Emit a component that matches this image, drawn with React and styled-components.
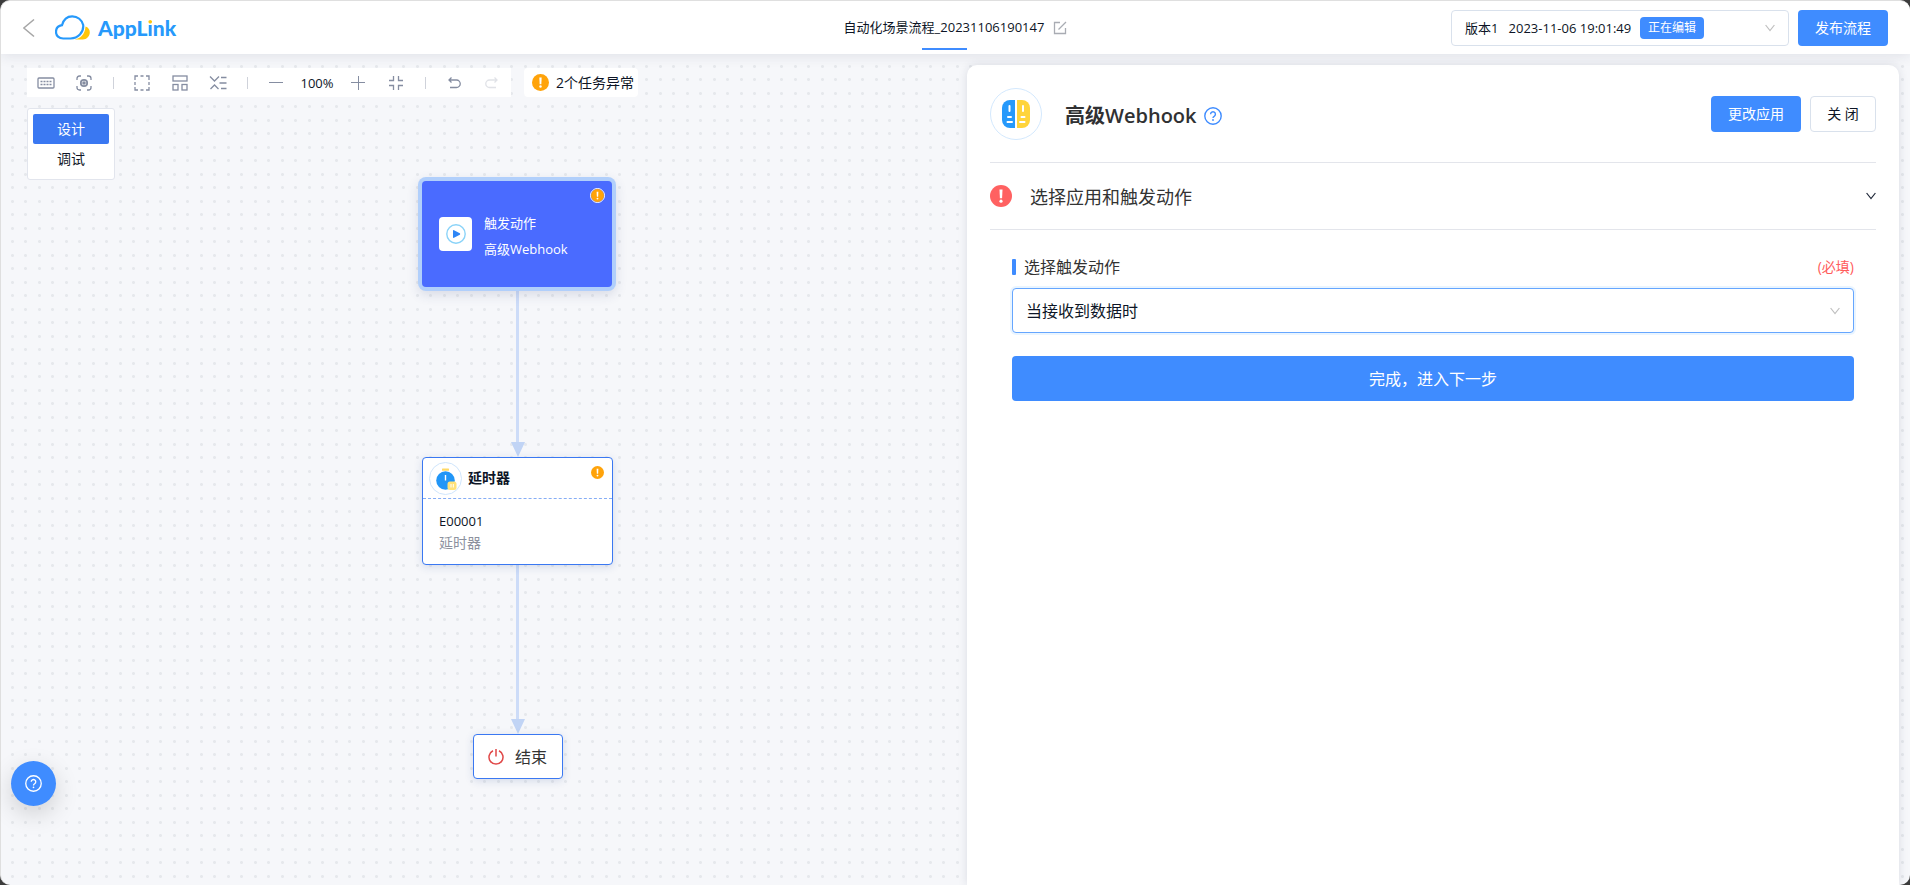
import React from "react";
import styled, { createGlobalStyle } from "styled-components";

const BLUE = "#3f8cff";

const GlobalStyle = createGlobalStyle`
  *, *::before, *::after { box-sizing: border-box; }
  body {
    margin: 0;
    background: #3c3c3c;
    color: #0d1526;
    font: 13px/20px "Open Sans", "Noto Sans CJK SC", sans-serif;
  }
  button, select, input { font: inherit; color: inherit; }
  button { border: 0; padding: 0; background: none; cursor: pointer; }
  h1, h2, p { margin: 0; font-size: inherit; font-weight: inherit; }
  svg { display: block; flex: none; }
`;

const Window = styled.div`
  min-height: 100vh;
  display: flex;
  flex-direction: column;
  overflow: hidden;
  border: solid #dfdfdf;
  border-width: 1px 0 0 1px;
  border-radius: 10px;
  background: #f6f7fa;
`;

/* ---------- header ---------- */

const Header = styled.header`
  position: relative;
  z-index: 2;
  display: grid;
  grid-template-columns: 1fr auto 1fr;
  align-items: center;
  height: 53px;
  padding: 0 22px;
  background: #fff;
  box-shadow: 0 2px 12px rgba(30, 40, 70, 0.1);
`;

const Brand = styled.div`
  display: flex;
  align-items: center;
  gap: 20px;
`;

const Logo = styled.a`
  display: flex;
  align-items: center;
  gap: 7px;
  color: #2699fb;
  font: 900 21px/28px Lato, sans-serif;
  text-decoration: none;
`;

const LogoDot = styled.span`
  color: transparent;
  background: linear-gradient(#ffc60a 0 9px, #2699fb 9px);
  background-clip: text;
`;

const TitleBar = styled.div`
  display: flex;
  align-items: center;
  gap: 9px;
  height: 53px;
`;

const Title = styled.h1`
  position: relative;
  height: 53px;
  line-height: 53px;

  &::after {
    content: "";
    position: absolute;
    left: calc(50% - 22px);
    bottom: 4px;
    width: 45px;
    height: 2px;
    background: ${BLUE};
  }
`;

const HeaderActions = styled.div`
  display: flex;
  justify-content: flex-end;
  gap: 9px;
`;

const Picker = styled.label`
  display: flex;
  align-items: center;
  gap: 8px;
  width: ${(p) => (p.$wide ? "100%" : "338px")};
  height: ${(p) => (p.$wide ? 45 : 36)}px;
  padding: 0 13px;
  border: 1px solid ${(p) => (p.$active ? "#66a6ff" : "#d9e1ec")};
  border-radius: 4px;
  background: #fff;
  box-shadow: ${(p) => (p.$active ? "0 0 0 2px #eaf5ff" : "none")};
  font-size: ${(p) => (p.$wide ? 16 : 13)}px;

  select {
    flex: ${(p) => (p.$wide ? 1 : "none")};
    height: 100%;
    padding: 0;
    border: 0;
    outline: 0;
    background: none;
    appearance: none;
  }
  svg { margin-left: auto; }
`;

const Tag = styled.span`
  padding: 0 8px;
  border-radius: 4px;
  background: ${BLUE};
  color: #fff;
  font-size: 12px;
  line-height: 22px;
`;

const Button = styled.button`
  width: ${(p) => p.$width || "90px"};
  height: ${(p) => (p.$large ? 45 : 36)}px;
  border: ${(p) => (p.$plain ? "1px solid #d9e1ec" : "0")};
  border-radius: 4px;
  background: ${(p) => (p.$plain ? "#fff" : BLUE)};
  color: ${(p) => (p.$plain ? "#0d1526" : "#fff")};
  font-size: ${(p) => (p.$large ? 16 : 14)}px;
`;

/* ---------- canvas ---------- */

const dot = "radial-gradient(circle, #e6e8ec 1px, transparent 2px)";

const Workspace = styled.main`
  position: relative;
  flex: 1;
  display: grid;
  grid-template-columns: 509fr 491fr;
  padding-right: 11px;
  background-image: ${dot}, ${dot}, ${dot}, ${dot};
  background-size: 27px 27px;
  background-position: -2px -1px, 11px -1px, -2px 12px, 11px 12px;
`;

const Canvas = styled.section`
  position: relative;
  display: flex;
  flex-direction: column;
  align-items: flex-start;
  gap: 11px;
  min-height: 760px;
  padding: 14px 26px;
`;

const TopTools = styled.div`
  display: flex;
  gap: 13px;
`;

const Toolbar = styled.div`
  display: flex;
  align-items: center;
  height: 29px;
  background: #fff;
`;

const Tool = styled.button`
  display: grid;
  place-items: center;
  width: 38px;
  height: 29px;
  color: #858da1;
  opacity: ${(p) => (p.disabled ? 0.25 : 1)};
`;

const Separator = styled.span`
  width: 1px;
  height: 12px;
  margin: 0 9px 0 10px;
  background: #cfd2da;
`;

const ZoomLevel = styled.output`
  width: 44px;
  text-align: center;
`;

const Alert = styled.button`
  display: flex;
  align-items: center;
  gap: 7px;
  height: 29px;
  padding: 0 4px 0 8px;
  border-radius: 4px;
  background: #fff;
  font-size: 14px;
`;

const Modes = styled.div`
  display: flex;
  flex-direction: column;
  width: 88px;
  padding: 5px;
  border: 1px solid #e2e5ed;
  border-radius: 3px;
  background: #fff;
`;

const Mode = styled.button`
  height: 30px;
  border-radius: 2px;
  background: ${(p) => (p.$active ? "#3a78f2" : "transparent")};
  color: ${(p) => (p.$active ? "#fff" : "#0d1526")};
  font-size: 14px;
`;

const Flow = styled.div`
  position: absolute;
  left: 421px;
  top: 127px;
  display: flex;
  flex-direction: column;
  align-items: center;
  width: 191px;
`;

const TriggerNode = styled.article`
  position: relative;
  align-self: flex-start;
  display: flex;
  align-items: center;
  gap: 12px;
  width: 190px;
  height: 106px;
  padding: 0 17px;
  border-radius: 4px;
  background: #4a6bff;
  box-shadow: 0 0 0 4px #b1cffb, 0 4px 12px 4px rgba(40, 60, 110, 0.14);
  color: #fff;
  line-height: 26px;
`;

const TriggerText = styled.div`
  padding-top: 3px;
`;

const PlayTile = styled.span`
  display: grid;
  place-items: center;
  width: 33px;
  height: 34px;
  border-radius: 4px;
  background: #fff;
`;

const NodeBadge = styled.span`
  position: absolute;
  top: ${(p) => (p.$ringed ? 7 : 8)}px;
  right: ${(p) => (p.$ringed ? 7 : 8)}px;
  border: ${(p) => (p.$ringed ? "1px solid #fff" : "0")};
  border-radius: 50%;
`;

const Connector = styled.div`
  display: flex;
  flex-direction: column;
  align-items: center;
  height: ${(p) => p.$length}px;

  &::before {
    content: "";
    flex: 1;
    width: 3px;
    background: #cddcf8;
  }
  &::after {
    content: "";
    border: solid transparent;
    border-width: 15px 7px 0;
    border-top-color: #c1d4f5;
  }
`;

const StepNode = styled.article`
  position: relative;
  width: 191px;
  border: 1px solid #3a78f2;
  border-radius: 4px;
  background: #fff;
  box-shadow: 0 2px 8px rgba(40, 70, 140, 0.16);
`;

const StepHead = styled.h2`
  display: flex;
  align-items: center;
  gap: 6px;
  height: 41px;
  padding-left: 6px;
  border-bottom: 1px dashed #86adf5;
  font-size: 14px;
  font-weight: 700;
`;

const StepBody = styled.div`
  padding: 11px 16px 10px;
  line-height: 22px;
`;

const Muted = styled.p`
  color: #8c919e;
  font-size: 14px;
`;

const EndNode = styled.article`
  display: flex;
  align-items: center;
  justify-content: center;
  gap: 11px;
  width: 90px;
  height: 45px;
  border: 1px solid #3a78f2;
  border-radius: 4px;
  background: #fff;
  box-shadow: 0 2px 8px rgba(40, 70, 140, 0.16);
  color: #333;
  font-size: 16px;
`;

const HelpFab = styled.button`
  position: fixed;
  left: 11px;
  bottom: 79px;
  display: grid;
  place-items: center;
  width: 45px;
  height: 45px;
  border-radius: 50%;
  background: ${BLUE};
  box-shadow: 0 8px 24px rgba(0, 0, 0, 0.16);
  color: #fff;
`;

/* ---------- settings panel ---------- */

const Panel = styled.aside`
  margin-top: 11px;
  padding: 0 23px;
  border-radius: 10px 10px 0 0;
  background: #fff;
  box-shadow: 0 0 10px rgba(30, 40, 70, 0.13);
`;

const PanelHead = styled.div`
  display: flex;
  align-items: center;
  gap: 23px;
  height: 98px;
  border-bottom: 1px solid #e3e5eb;
`;

const AppIcon = styled.span`
  display: grid;
  place-items: center;
  width: 52px;
  height: 52px;
  border: 1px solid #d3e8fd;
  border-radius: 50%;
`;

const PanelName = styled.div`
  display: flex;
  align-items: center;
  gap: 7px;
  padding-top: 4px;
`;

const PanelTitle = styled.h2`
  color: #303133;
  font-size: 20px;
  font-weight: 600;
  line-height: 28px;
`;

const PanelActions = styled.div`
  display: flex;
  gap: 9px;
  margin-left: auto;
`;

const SectionToggle = styled.button`
  display: flex;
  align-items: center;
  gap: 18px;
  width: 100%;
  height: 67px;
  border-bottom: 1px solid #e3e5eb;
  color: #333;
  font-size: 18px;

  svg:last-child { margin-left: auto; }
`;

const SectionName = styled.span`
  padding-top: 2px;
`;

const Form = styled.form`
  display: flex;
  flex-direction: column;
  padding: 25px 22px;
`;

const FieldHead = styled.div`
  display: flex;
  align-items: center;
  justify-content: space-between;
  height: 24px;
  margin-bottom: 9px;
`;

const FieldLabel = styled.label`
  display: flex;
  align-items: center;
  gap: 8px;
  color: #333;
  font-size: 16px;

  &::before {
    content: "";
    width: 4px;
    height: 16px;
    border-radius: 1px;
    background: ${BLUE};
  }
`;

const Required = styled.span`
  color: #ff5c5c;
  font-size: 14px;
`;

const FormActions = styled.div`
  display: flex;
  margin-top: 23px;
`;

/* ---------- icons ---------- */

const Icon = ({ w = 18, h = 18, sw = 1.3, children, ...rest }) => (
  <svg
    width={w}
    height={h}
    viewBox={`0 0 ${w} ${h}`}
    fill="none"
    stroke="currentColor"
    strokeWidth={sw}
    aria-hidden="true"
    {...rest}
  >
    {children}
  </svg>
);

const Exclaim = ({ size, color }) => (
  <svg width={size} height={size} viewBox="0 0 22 22" aria-hidden="true">
    <circle cx="11" cy="11" r="11" fill={color} />
    <path d="M9.500 4.500h3l-.4 8.800h-2.200z" fill="#fff" />
    <circle cx="11" cy="16.200" r="1.600" fill="#fff" />
  </svg>
);

const Question = ({ size }) => (
  <svg
    width={size}
    height={size}
    viewBox="0 0 18 18"
    fill="none"
    stroke="currentColor"
    strokeWidth="1.4"
    aria-hidden="true"
  >
    <circle cx="9" cy="9" r="8.2" />
    <path d="M6.6 7.2a2.4 2.4 0 1 1 3.6 2.1c-.8.5-1.2.8-1.2 1.7" />
    <circle cx="9" cy="13" r=".9" fill="currentColor" stroke="none" />
  </svg>
);

const Chevron = ({ color }) => (
  <Icon w={10} h={8} sw={1.2} style={{ color }}>
    <path d="M.6 1 5 6.600 9.400 1" />
  </Icon>
);

const CloudLogo = () => (
  <svg width="36" height="26" viewBox="0 0 36 26" aria-hidden="true">
    <path d="M30.500 11.500c2.700.8 4.300 3 4.300 5.800 0 4-3 7.200-7 7.200h-8.300c5.500-.6 10.600-5 11-13z" fill="#ffc60a" />
    <path
      d="M8.200 23.500c-4.200 0-7.200-2.800-7.200-6.600 0-3.700 2.600-6.200 6-6.700C8.500 4.500 12.300 1.300 17.200 1.300c5.400 0 9.800 3.600 11 8.700.7 7.500-5.200 13.500-12.700 13.500z"
      fill="#fff"
      stroke="#2699fb"
      strokeWidth="2.200"
    />
  </svg>
);

const WebhookIcon = () => (
  <svg width="30" height="30" viewBox="0 0 30 30" aria-hidden="true">
    <path d="M9 1h5v28H9a8 8 0 0 1-8-8V9a8 8 0 0 1 8-8z" fill="#2699fb" />
    <path d="M16 1h5a8 8 0 0 1 8 8v12a8 8 0 0 1-8 8h-5z" fill="#ffd43b" />
    <path
      d="M8.500 7v5M22 7v5M7 18h3M20.500 18h3M6.500 23h4.500M19 23h4.500"
      stroke="#fff"
      strokeWidth="2"
      strokeLinecap="round"
    />
  </svg>
);

const TimerIcon = () => (
  <svg width="33" height="33" viewBox="0 0 33 33" aria-hidden="true">
    <circle cx="16.500" cy="16.500" r="16" fill="#fff" stroke="#cfe5fc" />
    <rect x="13" y="6.500" width="7" height="2.200" rx=".5" fill="#ffd966" />
    <circle cx="16.500" cy="18.500" r="9.300" fill="#2196f7" />
    <path d="M16.500 13v5.500" stroke="#fff" strokeWidth="1.400" />
    <rect x="18.500" y="19.500" width="9" height="8.500" rx="2.500" fill="#ffe27a" />
    <path d="M22 22v3.500M24.300 22v3.500" stroke="#fff" />
  </svg>
);

/* ---------- page ---------- */

function EditorHeader() {
  return (
    <Header>
      <Brand>
        <button aria-label="返回">
          <Icon w={12} h={20} sw={1.6} style={{ color: "#a6a6a6" }}>
            <path d="M11 1.500.8 10 11 18.500" />
          </Icon>
        </button>
        <Logo href="#home">
          <CloudLogo />
          <span>
            AppL<LogoDot>i</LogoDot>nk
          </span>
        </Logo>
      </Brand>
      <TitleBar>
        <Title>自动化场景流程_20231106190147</Title>
        <button aria-label="重命名">
          <Icon w={14} h={14} style={{ color: "#a9acb3" }}>
            <path d="M7 1.500H1.500v11h11V7M5.500 8.500l7.500-7.500" />
          </Icon>
        </button>
      </TitleBar>
      <HeaderActions>
        <Picker>
          <select aria-label="版本">
            <option>{"版本1\u00a0\u00a0\u00a02023-11-06 19:01:49"}</option>
          </select>
          <Tag>正在编辑</Tag>
          <Chevron color="#bfbfbf" />
        </Picker>
        <Button>发布流程</Button>
      </HeaderActions>
    </Header>
  );
}

function CanvasToolbar() {
  return (
    <TopTools>
      <Toolbar role="toolbar">
        <Tool aria-label="快捷键">
          <Icon>
            <rect x="1" y="4" width="16" height="10" rx="1" />
            <path d="M3.500 7.500h11M3.500 10.500h11" strokeDasharray="2 1" />
          </Icon>
        </Tool>
        <Tool aria-label="定位">
          <Icon>
            <path d="M2 6V4.500Q2 2 4.500 2H6M12 2h1.500Q16 2 16 4.500V6M16 12v1.500q0 2.500-2.500 2.500H12M6 16H4.500Q2 16 2 13.500V12" />
            <circle cx="9" cy="9" r="3.200" strokeWidth="1.800" />
            <circle cx="9" cy="9" r="1.800" fill="currentColor" stroke="none" />
          </Icon>
        </Tool>
        <Separator />
        <Tool aria-label="框选">
          <Icon>
            <path d="M2 6V2h3M7.500 2h3M13 2h3v4M16 8v3M16 13v3h-3M10.500 16h-3M5 16H2v-3M2 11V8" />
          </Icon>
        </Tool>
        <Tool aria-label="布局">
          <Icon>
            <rect x="2" y="2" width="14" height="5" />
            <rect x="2" y="10.500" width="5" height="5.500" />
            <rect x="11" y="10.500" width="5" height="5.500" />
          </Icon>
        </Tool>
        <Tool aria-label="折叠">
          <Icon>
            <path d="m1 2.500 4.500 4.500L10 2.500M1.500 15l4-4 4 4M12 3.500h5.500M10.500 9h7M12 14.500h5.500" />
          </Icon>
        </Tool>
        <Separator />
        <Tool aria-label="缩小">
          <Icon sw={1}>
            <path d="M2 8.500h14" />
          </Icon>
        </Tool>
        <ZoomLevel>100%</ZoomLevel>
        <Tool aria-label="放大">
          <Icon sw={1}>
            <path d="M2 8.500h14M9.500 2v14" />
          </Icon>
        </Tool>
        <Tool aria-label="适应画布">
          <Icon>
            <path d="M6.500 2v4.500H2M11.500 2v4.500H16M6.500 16v-4.500H2M11.500 16v-4.500H16" />
          </Icon>
        </Tool>
        <Separator />
        <Tool aria-label="撤销">
          <Icon>
            <path d="M6.500 3.500 4 6l2.500 2.500M4 6h7.500a3.500 3.500 0 0 1 0 7.500H5" />
          </Icon>
        </Tool>
        <Tool aria-label="重做" disabled>
          <Icon>
            <path d="M11.500 3.500 14 6l-2.500 2.500M14 6H6.500a3.500 3.500 0 0 0 0 7.500H13" />
          </Icon>
        </Tool>
      </Toolbar>
      <Alert>
        <Exclaim size={17} color="#ffa30a" />
        2个任务异常
      </Alert>
    </TopTools>
  );
}

function FlowChart() {
  return (
    <Flow>
      <TriggerNode>
        <PlayTile>
          <svg width="20" height="20" viewBox="0 0 20 20" aria-hidden="true">
            <circle cx="10" cy="10" r="9.200" fill="#fff" stroke="#8ad3f8" strokeWidth="1.400" />
            <path d="M7 6.800q0-1 1-.6l5.800 3q.9.800 0 1.600l-5.800 3q-1 .4-1-.6z" fill="#2f86f6" />
          </svg>
        </PlayTile>
        <TriggerText>
          <p>触发动作</p>
          <p>高级Webhook</p>
        </TriggerText>
        <NodeBadge $ringed>
          <Exclaim size={13} color="#ffa30a" />
        </NodeBadge>
      </TriggerNode>
      <Connector $length={170} />
      <StepNode>
        <StepHead>
          <TimerIcon />
          延时器
        </StepHead>
        <StepBody>
          <p>E00001</p>
          <Muted>延时器</Muted>
        </StepBody>
        <NodeBadge>
          <Exclaim size={13} color="#ffa30a" />
        </NodeBadge>
      </StepNode>
      <Connector $length={169} />
      <EndNode>
        <Icon w={16} h={16} sw={1.5} style={{ color: "#e04848" }}>
          <path d="M5 1.800a7 7 0 1 0 6 0M8 0v7.500" />
        </Icon>
        结束
      </EndNode>
    </Flow>
  );
}

function SettingsPanel() {
  return (
    <Panel>
      <PanelHead>
        <AppIcon>
          <WebhookIcon />
        </AppIcon>
        <PanelName>
          <PanelTitle>高级Webhook</PanelTitle>
          <button aria-label="帮助" style={{ color: BLUE }}>
            <Question size={18} />
          </button>
        </PanelName>
        <PanelActions>
          <Button>更改应用</Button>
          <Button $plain $width="66px">
            关 闭
          </Button>
        </PanelActions>
      </PanelHead>
      <SectionToggle aria-expanded="true">
        <Exclaim size={22} color="#ff6161" />
        <SectionName>选择应用和触发动作</SectionName>
        <Chevron color="#1f2738" />
      </SectionToggle>
      <Form onSubmit={(e) => e.preventDefault()}>
        <FieldHead>
          <FieldLabel htmlFor="trigger">选择触发动作</FieldLabel>
          <Required>(必填)</Required>
        </FieldHead>
        <Picker $wide $active htmlFor="trigger">
          <select id="trigger">
            <option>当接收到数据时</option>
          </select>
          <Chevron color="#bfbfbf" />
        </Picker>
        <FormActions>
          <Button $large $width="100%">
            完成，进入下一步
          </Button>
        </FormActions>
      </Form>
    </Panel>
  );
}

export default function App() {
  return (
    <>
      <GlobalStyle />
      <Window>
        <EditorHeader />
        <Workspace>
          <Canvas>
            <CanvasToolbar />
            <Modes>
              <Mode $active>设计</Mode>
              <Mode>调试</Mode>
            </Modes>
            <FlowChart />
          </Canvas>
          <SettingsPanel />
        </Workspace>
        <HelpFab aria-label="帮助中心">
          <Question size={17} />
        </HelpFab>
      </Window>
    </>
  );
}
